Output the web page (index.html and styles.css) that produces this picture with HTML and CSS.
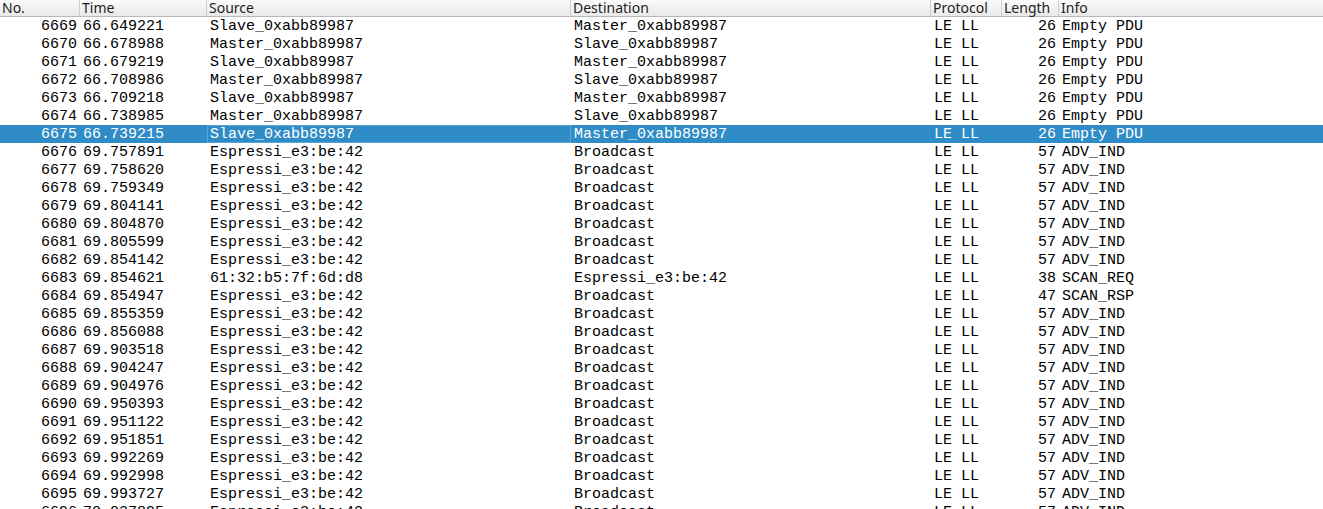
FILE: index.html
```html
<!DOCTYPE html>
<html>
<head>
<meta charset="utf-8">
<link rel="stylesheet" href="styles.css">
</head>
<body>
<div class="list">
  <div class="hdr">
    <div class="hc">No.</div>
    <div class="hc">Time</div>
    <div class="hc">Source</div>
    <div class="hc">Destination</div>
    <div class="hc">Protocol</div>
    <div class="hc">Length</div>
    <div class="hc last">Info</div>
  </div>
  <div class="rows">
    <div class="row"><span class="r">6669</span><span>66.649221</span><span>Slave_0xabb89987</span><span>Master_0xabb89987</span><span>LE LL</span><span class="r">26</span><span>Empty PDU</span></div>
    <div class="row"><span class="r">6670</span><span>66.678988</span><span>Master_0xabb89987</span><span>Slave_0xabb89987</span><span>LE LL</span><span class="r">26</span><span>Empty PDU</span></div>
    <div class="row"><span class="r">6671</span><span>66.679219</span><span>Slave_0xabb89987</span><span>Master_0xabb89987</span><span>LE LL</span><span class="r">26</span><span>Empty PDU</span></div>
    <div class="row"><span class="r">6672</span><span>66.708986</span><span>Master_0xabb89987</span><span>Slave_0xabb89987</span><span>LE LL</span><span class="r">26</span><span>Empty PDU</span></div>
    <div class="row"><span class="r">6673</span><span>66.709218</span><span>Slave_0xabb89987</span><span>Master_0xabb89987</span><span>LE LL</span><span class="r">26</span><span>Empty PDU</span></div>
    <div class="row"><span class="r">6674</span><span>66.738985</span><span>Master_0xabb89987</span><span>Slave_0xabb89987</span><span>LE LL</span><span class="r">26</span><span>Empty PDU</span></div>
    <div class="row sel"><span class="r">6675</span><span>66.739215</span><span class="focus">Slave_0xabb89987</span><span>Master_0xabb89987</span><span>LE LL</span><span class="r">26</span><span>Empty PDU</span></div>
    <div class="row"><span class="r">6676</span><span>69.757891</span><span>Espressi_e3:be:42</span><span>Broadcast</span><span>LE LL</span><span class="r">57</span><span>ADV_IND</span></div>
    <div class="row"><span class="r">6677</span><span>69.758620</span><span>Espressi_e3:be:42</span><span>Broadcast</span><span>LE LL</span><span class="r">57</span><span>ADV_IND</span></div>
    <div class="row"><span class="r">6678</span><span>69.759349</span><span>Espressi_e3:be:42</span><span>Broadcast</span><span>LE LL</span><span class="r">57</span><span>ADV_IND</span></div>
    <div class="row"><span class="r">6679</span><span>69.804141</span><span>Espressi_e3:be:42</span><span>Broadcast</span><span>LE LL</span><span class="r">57</span><span>ADV_IND</span></div>
    <div class="row"><span class="r">6680</span><span>69.804870</span><span>Espressi_e3:be:42</span><span>Broadcast</span><span>LE LL</span><span class="r">57</span><span>ADV_IND</span></div>
    <div class="row"><span class="r">6681</span><span>69.805599</span><span>Espressi_e3:be:42</span><span>Broadcast</span><span>LE LL</span><span class="r">57</span><span>ADV_IND</span></div>
    <div class="row"><span class="r">6682</span><span>69.854142</span><span>Espressi_e3:be:42</span><span>Broadcast</span><span>LE LL</span><span class="r">57</span><span>ADV_IND</span></div>
    <div class="row"><span class="r">6683</span><span>69.854621</span><span>61:32:b5:7f:6d:d8</span><span>Espressi_e3:be:42</span><span>LE LL</span><span class="r">38</span><span>SCAN_REQ</span></div>
    <div class="row"><span class="r">6684</span><span>69.854947</span><span>Espressi_e3:be:42</span><span>Broadcast</span><span>LE LL</span><span class="r">47</span><span>SCAN_RSP</span></div>
    <div class="row"><span class="r">6685</span><span>69.855359</span><span>Espressi_e3:be:42</span><span>Broadcast</span><span>LE LL</span><span class="r">57</span><span>ADV_IND</span></div>
    <div class="row"><span class="r">6686</span><span>69.856088</span><span>Espressi_e3:be:42</span><span>Broadcast</span><span>LE LL</span><span class="r">57</span><span>ADV_IND</span></div>
    <div class="row"><span class="r">6687</span><span>69.903518</span><span>Espressi_e3:be:42</span><span>Broadcast</span><span>LE LL</span><span class="r">57</span><span>ADV_IND</span></div>
    <div class="row"><span class="r">6688</span><span>69.904247</span><span>Espressi_e3:be:42</span><span>Broadcast</span><span>LE LL</span><span class="r">57</span><span>ADV_IND</span></div>
    <div class="row"><span class="r">6689</span><span>69.904976</span><span>Espressi_e3:be:42</span><span>Broadcast</span><span>LE LL</span><span class="r">57</span><span>ADV_IND</span></div>
    <div class="row"><span class="r">6690</span><span>69.950393</span><span>Espressi_e3:be:42</span><span>Broadcast</span><span>LE LL</span><span class="r">57</span><span>ADV_IND</span></div>
    <div class="row"><span class="r">6691</span><span>69.951122</span><span>Espressi_e3:be:42</span><span>Broadcast</span><span>LE LL</span><span class="r">57</span><span>ADV_IND</span></div>
    <div class="row"><span class="r">6692</span><span>69.951851</span><span>Espressi_e3:be:42</span><span>Broadcast</span><span>LE LL</span><span class="r">57</span><span>ADV_IND</span></div>
    <div class="row"><span class="r">6693</span><span>69.992269</span><span>Espressi_e3:be:42</span><span>Broadcast</span><span>LE LL</span><span class="r">57</span><span>ADV_IND</span></div>
    <div class="row"><span class="r">6694</span><span>69.992998</span><span>Espressi_e3:be:42</span><span>Broadcast</span><span>LE LL</span><span class="r">57</span><span>ADV_IND</span></div>
    <div class="row"><span class="r">6695</span><span>69.993727</span><span>Espressi_e3:be:42</span><span>Broadcast</span><span>LE LL</span><span class="r">57</span><span>ADV_IND</span></div>
    <div class="row"><span class="r">6696</span><span>70.037895</span><span>Espressi_e3:be:42</span><span>Broadcast</span><span>LE LL</span><span class="r">57</span><span>ADV_IND</span></div>
  </div>
</div>
</body>
</html>
```

FILE: styles.css
```css
html, body {
  margin: 0;
  padding: 0;
  background: #ffffff;
  height: 509px;
  overflow: hidden;
}

.list {
  width: 1323px;
}

.hdr, .row {
  display: grid;
  grid-template-columns: 80px 127px 364px 360px 71px 57px 1fr;
}

.hdr {
  height: 16px;
  border-bottom: 1px solid #b9b9b9;
  background: linear-gradient(#fbfbfb, #e9e9e9);
  font-family: "Noto Sans", sans-serif;
  font-size: 14px;
  line-height: 16px;
  color: #222222;
}

.hc {
  padding-left: 2px;
  border-right: 1px solid #cfcfcf;
  white-space: nowrap;
}

.hc.last {
  border-right: none;
}

.row {
  height: 18px;
  grid-template-rows: 18px;
  font-family: "Liberation Mono", monospace;
  font-size: 15px;
  line-height: 19px;
  color: #000000;
  white-space: nowrap;
}

.row span {
  padding-left: 3px;
  overflow: hidden;
}

.row span.r {
  text-align: right;
  padding-left: 0;
  padding-right: 3px;
}

.row.sel {
  background: #308cc6;
  color: #ffffff;
}

.row.sel .focus {
  box-shadow: inset 0 0 0 1px #5aa6d8;
}
```
